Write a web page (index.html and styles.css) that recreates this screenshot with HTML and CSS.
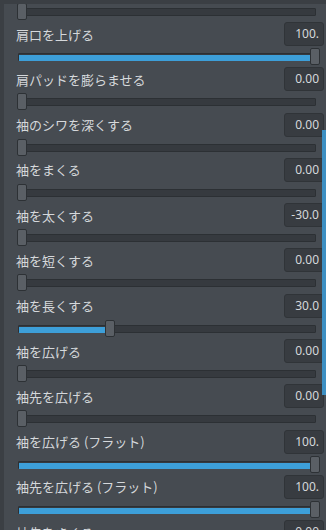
FILE: index.html
```html
<!DOCTYPE html>
<html>
<head>
    <meta charset="UTF-8" />
    <title>袖の設定</title>
    <link rel="stylesheet" href="styles.css">
</head>
<body>
    <div class="panel">
        <div class="list">
            <div class="row">
                <div class="row-head"></div>
                <div class="slider"><div class="track"></div><div class="knob" style="left:0px"></div></div>
            </div>
            <div class="row">
                <div class="row-head"><span class="label">肩口を上げる</span><span class="value">100.</span></div>
                <div class="slider"><div class="track"><div class="fill" style="width:292px"></div></div><div class="knob" style="left:293px"></div></div>
            </div>
            <div class="row">
                <div class="row-head"><span class="label">肩パッドを膨らませる</span><span class="value">0.00</span></div>
                <div class="slider"><div class="track"></div><div class="knob" style="left:0px"></div></div>
            </div>
            <div class="row">
                <div class="row-head"><span class="label">袖のシワを深くする</span><span class="value">0.00</span></div>
                <div class="slider"><div class="track"></div><div class="knob" style="left:0px"></div></div>
            </div>
            <div class="row">
                <div class="row-head"><span class="label">袖をまくる</span><span class="value">0.00</span></div>
                <div class="slider"><div class="track"></div><div class="knob" style="left:0px"></div></div>
            </div>
            <div class="row">
                <div class="row-head"><span class="label">袖を太くする</span><span class="value">-30.0</span></div>
                <div class="slider"><div class="track"></div><div class="knob" style="left:0px"></div></div>
            </div>
            <div class="row">
                <div class="row-head"><span class="label">袖を短くする</span><span class="value">0.00</span></div>
                <div class="slider"><div class="track"></div><div class="knob" style="left:0px"></div></div>
            </div>
            <div class="row">
                <div class="row-head"><span class="label">袖を長くする</span><span class="value">30.0</span></div>
                <div class="slider"><div class="track"><div class="fill" style="width:87px"></div></div><div class="knob" style="left:88px"></div></div>
            </div>
            <div class="row">
                <div class="row-head"><span class="label">袖を広げる</span><span class="value">0.00</span></div>
                <div class="slider"><div class="track"></div><div class="knob" style="left:0px"></div></div>
            </div>
            <div class="row">
                <div class="row-head"><span class="label">袖先を広げる</span><span class="value">0.00</span></div>
                <div class="slider"><div class="track"></div><div class="knob" style="left:0px"></div></div>
            </div>
            <div class="row">
                <div class="row-head"><span class="label">袖を広げる (フラット)</span><span class="value">100.</span></div>
                <div class="slider"><div class="track"><div class="fill" style="width:292px"></div></div><div class="knob" style="left:293px"></div></div>
            </div>
            <div class="row">
                <div class="row-head"><span class="label">袖先を広げる (フラット)</span><span class="value">100.</span></div>
                <div class="slider"><div class="track"><div class="fill" style="width:292px"></div></div><div class="knob" style="left:293px"></div></div>
            </div>
            <div class="row">
                <div class="row-head"><span class="label">袖先をまくる</span><span class="value">0.00</span></div>
                <div class="slider"><div class="track"></div><div class="knob" style="left:0px"></div></div>
            </div>
        </div>
        <div class="scroll-thumb"></div>
    </div>
</body>
</html>
```

FILE: styles.css
```css
html, body {
    margin: 0;
    padding: 0;
    background-color: #464b51;
}

body {
    font-family: "Noto Sans CJK JP", "Noto Sans", sans-serif;
    color: #d5d8db;
}

.panel {
    position: relative;
    width: 322px;
    height: 526px;
    border-top: 4px solid #3b3f44;
    border-left: 4px solid #3b3f44;
    overflow: hidden;
}

.list {
    margin-top: -27.3px;
    padding: 0 2px 0 12px;
}

.row {
    height: 45.3px;
}

.row-head {
    display: flex;
    justify-content: space-between;
    align-items: center;
    height: 24px;
}

.label {
    font-size: 13px;
    line-height: 1;
}

.value {
    width: 40px;
    height: 24px;
    box-sizing: border-box;
    background-color: #383c41;
    border: 1px solid #303438;
    border-radius: 3px;
    font-family: "Noto Sans", sans-serif;
    font-size: 12px;
    line-height: 22px;
    text-align: right;
    padding-right: 4px;
    overflow: hidden;
    white-space: nowrap;
}

.slider {
    position: relative;
    margin-top: 2px;
    margin-left: 1px;
    width: 303px;
    height: 17px;
}

.track {
    position: absolute;
    left: 1px;
    right: 4px;
    top: 5px;
    height: 8px;
    box-sizing: border-box;
    background-color: #363a3f;
    border: 1px solid #2c3034;
    border-radius: 1px;
}

.fill {
    height: 6px;
    margin-top: 1px;
    background-color: #3d9fd9;
}

.knob {
    position: absolute;
    top: 0;
    width: 10px;
    height: 17px;
    box-sizing: border-box;
    background-color: #5a5f65;
    border: 1px solid #2d3135;
    border-radius: 2px;
}

.scroll-thumb {
    position: absolute;
    right: 0;
    top: 126px;
    width: 4px;
    height: 265px;
    background-color: #3d8fc2;
}
```
